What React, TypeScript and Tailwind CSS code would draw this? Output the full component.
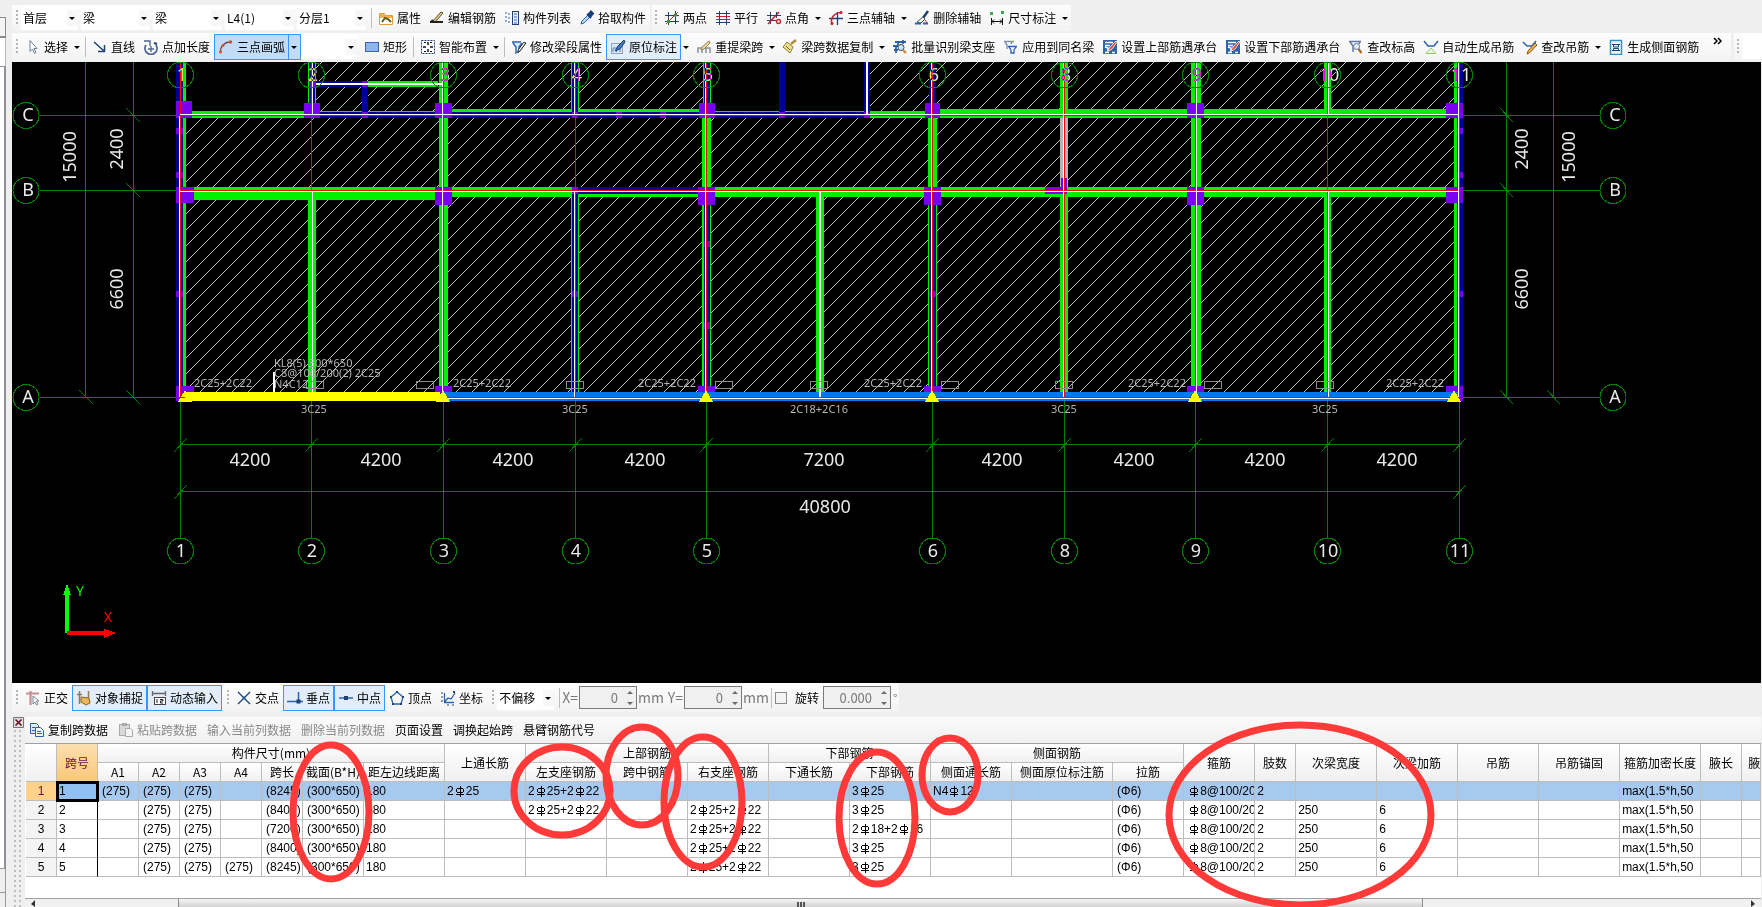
import type { ReactNode } from "react"
import clsx from "clsx"

const NAVY = "#1f4173"
const BLUE = "#2a63ad"
const RED = "#c8202c"

const ICONS: Record<string, ReactNode> = {
  props: (
    <>
      <path d="M1.5 3.5h5l1 2h7v9h-13z" fill="#fff" stroke="#e09a3c" />
      <path d="M2 4h4.500l1 2H14v2H2z" fill="#f5b04e" />
      <path d="M4 12l3-4 3 1 3 3" fill="none" stroke="#6b5a1e" strokeWidth="2" />
    </>
  ),
  editBar: (
    <>
      <path d="M1 12h13" stroke="#222" strokeWidth="2" />
      <path d="M4 11l8-9 2 1-7 8" fill="#e9cf8f" stroke="#5a4520" />
      <path d="M2 12l2-2" stroke="#222" strokeWidth="2" />
    </>
  ),
  list: (
    <>
      <path d="M2 2v12M5 3v10" stroke={BLUE} strokeDasharray="2 2" />
      <rect x="8.500" y="1.500" width="6" height="13" fill="#eaf2fb" stroke={NAVY} />
      <path d="M10 4h3M10 7h3M10 10h3M10 13h3" stroke={BLUE} />
    </>
  ),
  dropper: (
    <>
      <path d="M2 14l1-3 6-6 2 2-6 6z" fill="#bcdcf5" stroke={BLUE} />
      <path d="M8 4l4 4M9 5l3-3.500 2 2L11 7z" stroke="#173f7a" strokeWidth="2" fill="#173f7a" />
    </>
  ),
  twoPoint: (
    <>
      <path d="M4.500 2v13M11.500 1v13M1 5.500h14M1 11.500h14" stroke={NAVY} />
      <path d="M2 14L14 2" stroke={RED} />
      <circle cx="11.500" cy="5" r="1.800" fill="#3f8f2c" />
      <circle cx="4.500" cy="11.500" r="1.800" fill="#3f8f2c" />
    </>
  ),
  parallel: (
    <>
      <path d="M4.500 1v14M11.500 1v14" stroke={NAVY} />
      <path d="M1 3.500h14M1 12.500h14" stroke={NAVY} />
      <path d="M1 6.500h14M1 9.500h14" stroke={RED} />
    </>
  ),
  pointAngle: (
    <>
      <path d="M4.500 2v12M1 5.500h14M1 10.500h9" stroke={NAVY} />
      <path d="M2 14L13 2" stroke={RED} strokeWidth="1.500" />
      <path d="M10.500 2v6" stroke={NAVY} />
      <circle cx="12.500" cy="11.500" r="2" fill="none" stroke={RED} strokeWidth="1.300" />
    </>
  ),
  threeAxis: (
    <>
      <path d="M1 8.500h14M9.500 2v13" stroke={NAVY} strokeWidth="1.300" />
      <path d="M4 14C2 8 6 3 13 2.500" fill="none" stroke={RED} strokeWidth="1.500" />
      <circle cx="13" cy="2.500" r="1.500" fill={RED} />
      <circle cx="4" cy="13.500" r="1.500" fill={RED} />
    </>
  ),
  brush: (
    <>
      <path d="M14 1l-5 7" stroke={NAVY} strokeWidth="2.500" />
      <path d="M9 7l2 2-4 4-4-1z" fill="#f4f4f4" stroke="#555" />
      <path d="M1 13.500h6M9 13.500h5" stroke={BLUE} strokeWidth="2" />
      <path d="M11 10l2 3" stroke={RED} />
    </>
  ),
  dimension: (
    <>
      <rect x="1" y="2" width="3" height="3" fill="#46a64d" />
      <rect x="12" y="1" width="3" height="3" fill="#46a64d" />
      <path d="M2.500 8v7M13.500 8v7M3 11.500h10M5 9.500l-2 2 2 2M11 9.500l2 2-2 2" fill="none" stroke="#111" />
    </>
  ),
  cursor: (
    <path d="M5 1.500v11l2.500-2.500 2 4.500 1.500-1-2-4h3z" fill="#fff" stroke="#6d7f9a" />
  ),
  line: (
    <path d="M2 3l10 9M12.500 6v6.500H6" fill="none" stroke={NAVY} strokeWidth="1.500" />
  ),
  pointLength: (
    <>
      <path d="M3 6a6 6 0 1 0 10 0" fill="none" stroke="#47658f" strokeWidth="1.800" />
      <path d="M1 2h6v5M5 10h6M8 7v6" fill="none" stroke="#47658f" strokeWidth="1.300" />
      <path d="M11 4l3 1" stroke={NAVY} strokeWidth="2" />
    </>
  ),
  arc: (
    <>
      <path d="M2.500 13.500C2 8 6 3 12.500 3" fill="none" stroke="#6a4a4a" strokeWidth="1.300" />
      <circle cx="2.500" cy="13" r="1.500" fill="#d8502c" />
      <circle cx="5" cy="6.500" r="1.500" fill="#d8502c" />
      <circle cx="12.500" cy="3" r="1.700" fill="#d8502c" />
    </>
  ),
  rect: <rect x="1.500" y="3.500" width="13" height="9" fill="#8fb4f2" stroke="#3a62b5" />,
  smart: (
    <>
      <rect x="1.500" y="1.500" width="13" height="13" fill="#fff" stroke={NAVY} strokeDasharray="2 1" />
      <path d="M8 3v3M8 10v3M3 8h3M10 8h3" stroke="#111" strokeWidth="1.500" />
      <path d="M4 3.500h2M10 3.500h2M4 12.500h2M10 12.500h2" stroke="#111" />
    </>
  ),
  modify: (
    <>
      <path d="M1 3h9M2 4l3 4v6l3-2V8l3-4" fill="#d8ecff" stroke={BLUE} strokeWidth="1.400" />
      <path d="M15 4l-6 8-2 1.500.5-3 5-7z" fill="#f3f0e0" stroke="#222" />
    </>
  ),
  annotate: (
    <>
      <rect x="1.500" y="4.500" width="11" height="10" fill="#dbe7f5" stroke="#8ea6c4" />
      <path d="M3 13V9h7v4M6.500 9v4" fill="none" stroke="#5f7ea8" />
      <path d="M14 1L8 7l-3 5 5-2 5-7z" fill="#3f79c6" stroke="#173f7a" />
    </>
  ),
  respan: (
    <>
      <path d="M2 14V9h12v5M6 9v5M10 9v5" fill="none" stroke="#8793a4" strokeWidth="1.500" />
      <path d="M13 2L6 8l-1 3 3-1 6-6z" fill="#ead9a5" stroke="#9b8140" />
    </>
  ),
  copySpan: (
    <>
      <path d="M14 1l-5 4" stroke="#b08b3c" strokeWidth="2.500" />
      <path d="M5 3l6 5-3 6-7-6z" fill="#f0e08c" stroke="#8d7a2e" />
      <path d="M4 7l4 4" stroke="#555" />
    </>
  ),
  batch: (
    <>
      <path d="M3 3h11M1 7h5M2 11h4M4 14V8M6 2v4M11 1v4" stroke={BLUE} strokeWidth="1.800" />
      <circle cx="9" cy="8.500" r="3" fill="#cfe6fa" stroke="#444" />
      <path d="M11 11l3 3" stroke="#c98a2e" strokeWidth="2.200" />
    </>
  ),
  apply: (
    <>
      <path d="M1 2.500h10M2 3l2 3v4M9 3L8 5" fill="none" stroke="#8193b0" strokeWidth="1.500" />
      <path d="M5 7.500h9M6 8l2 3v3h3v-3l2-3" fill="#fff" stroke={BLUE} strokeWidth="1.300" />
    </>
  ),
  bearing: (
    <>
      <path d="M1 1h14v14H1z" fill="#2f64a8" />
      <path d="M3 3.500h8M3 6.500h5M3 8l3 1v3M3 13.500h4M10 13.500h3" fill="none" stroke="#fff" strokeWidth="1.500" />
      <path d="M14 2L8 8l-3 5 5-3 5-7z" fill="#e8472f" stroke="#fff" strokeWidth="0.800" />
    </>
  ),
  checkLevel: (
    <>
      <path d="M1 2.500h12M2 3l3 4v6M12 3l-1 2" fill="none" stroke="#6279a8" strokeWidth="1.500" />
      <circle cx="8.500" cy="7.500" r="3" fill="#e6f1fb" stroke="#68758a" />
      <path d="M10.500 10l3 4" stroke="#a5682b" strokeWidth="2.200" />
    </>
  ),
  autoHang: (
    <>
      <path d="M1 2l4 5h6l4-5" fill="none" stroke={BLUE} strokeWidth="1.500" />
      <path d="M3 14.500L8 9l5 5.500z" fill="#eaf7dd" stroke="#8fcf72" />
    </>
  ),
  editHang: (
    <>
      <path d="M1 3l4 4h5l4-5" fill="none" stroke={BLUE} strokeWidth="1.500" />
      <path d="M13 4l-7 8-1 3 3-1.500L15 6z" fill="#f0b046" stroke="#8a5a1d" />
    </>
  ),
  sideBar: (
    <>
      <rect x="2.500" y="1.500" width="11" height="14" fill="#eef7fd" stroke="#3c8fc0" strokeWidth="1.500" />
      <path d="M4 5.500h8M4 11.500h8M5.500 5v3h5V5M5.500 12V9.500h5V12" fill="none" stroke={NAVY} />
    </>
  ),
  ortho: (
    <>
      <path d="M1 3.500h13M5.500 1v14" stroke="#c98d8d" strokeWidth="2.200" />
      <path d="M8 6v8l2-2 1.500 3 1.500-1-1.500-3H14z" fill="#fff" stroke="#7a88a0" />
    </>
  ),
  snap: (
    <>
      <path d="M3.500 1v13M12.500 1v7M1 4.500h5" stroke="#9a7a4a" strokeWidth="1.500" />
      <path d="M5 7l8 1 1 5-4 2-5-3z" fill="#e8b75c" stroke="#8d6422" />
    </>
  ),
  dynInput: (
    <>
      <path d="M1 3.500h14M1.500 1v5M14.500 1v5" stroke="#666" strokeWidth="1.300" />
      <rect x="3.500" y="7.500" width="11" height="7" fill="#fff" stroke="#444" />
      <path d="M6 9v4M9 9.500h3v1.500H9.500v2H12" fill="none" stroke="#222" />
    </>
  ),
  cross: (
    <>
      <path d="M2 2l12 12M14 2L2 14" stroke={NAVY} strokeWidth="1.300" />
      <rect x="6.500" y="6.500" width="3" height="3" fill={BLUE} />
    </>
  ),
  perp: (
    <>
      <path d="M0 11.500h16M11.500 2v10" stroke={BLUE} strokeWidth="1.500" />
      <rect x="9.500" y="9.500" width="4" height="4" fill={NAVY} />
    </>
  ),
  mid: (
    <>
      <path d="M1 8h14" stroke={BLUE} strokeWidth="1.500" />
      <rect x="6" y="6" width="4" height="4" fill={NAVY} />
    </>
  ),
  vertex: (
    <>
      <path d="M8 2l6 5-2 7H4L2 7z" fill="none" stroke={BLUE} strokeWidth="1.300" />
      <path d="M7 1h2v2H7zM1 6h2v2H1zM13 6h2v2h-2zM3 13h2v2H3zM11 13h2v2h-2z" fill={NAVY} />
    </>
  ),
  coord: (
    <>
      <path d="M4.500 3v9.500H14M4.500 12L8 8l3 1 4-6" fill="none" stroke={BLUE} strokeWidth="1.300" />
      <path d="M1 3h2M1 7h2M1 11h2M7 15h2M12 15h2M13 1l2 2M15 1l-2 2" stroke={NAVY} />
    </>
  ),
  copy: (
    <>
      <path d="M1.500 1.500h6l2 2v8h-8z" fill="#dceafb" stroke={BLUE} />
      <path d="M6.500 5.500h5l3 3v6h-8z" fill="#eef5fd" stroke={BLUE} />
      <path d="M8 9.500h4M8 11.500h5M3 5.500h3M3 8.500h3" stroke={BLUE} />
    </>
  ),
  paste: (
    <>
      <rect x="1.500" y="2.500" width="10" height="11" fill="#d9d9d9" stroke="#aaa" />
      <rect x="4" y="1" width="5" height="3" fill="#aaa" />
      <path d="M7.500 6.500h5l2 2v6h-7z" fill="#f4f4f4" stroke="#aaa" />
    </>
  ),
}

const Icon = ({ name }: { name: string }) => (
  <svg viewBox="0 0 16 16" className="h-4 w-4 shrink-0" aria-hidden="true">
    {ICONS[name]}
  </svg>
)

const Caret = ({ className }: { className?: string }) => (
  <svg viewBox="0 0 11 16" className={clsx("h-4 w-[11px] shrink-0", className)} aria-hidden="true">
    <path d="M2 7h6L5 10z" fill="#000" />
  </svg>
)

const Grip = () => (
  <svg viewBox="0 0 8 20" className="h-5 w-2 shrink-0" aria-hidden="true">
    <path d="M4 2v16" stroke="#b5b5b5" strokeWidth="2" strokeDasharray="2 2" />
  </svg>
)

const Separator = () => <span className="mx-[2px] h-5 w-px shrink-0 bg-[#bdbdbd]" />

interface ToolProps {
  icon?: string
  label: string
  menu?: boolean
  active?: boolean
  disabled?: boolean
}

const Tool = ({ icon, label, menu, active, disabled }: ToolProps) => (
  <>
    <button
      type="button"
      disabled={disabled}
      className={clsx(
        "flex h-[26px] shrink-0 items-center gap-[3px] whitespace-nowrap border px-[3px]",
        active ? "border-[#3399ff] bg-[#e2edf9]" : "border-transparent",
        disabled && "text-[#8a8a8a]",
      )}>
      {icon && <Icon name={icon} />}
      {label}
    </button>
    {menu && <Caret />}
  </>
)

const Combo = ({ label, value, width }: { label: string; value: string; width: string }) => (
  <span className={clsx("mr-[3px] flex h-6 shrink-0 items-center bg-white", width)}>
    <select
      aria-label={label}
      defaultValue={value}
      className="h-full min-w-0 flex-1 appearance-none bg-white pl-[2px] outline-none">
      <option>{value}</option>
    </select>
    <Caret className="bg-[#f7f7f7]" />
  </span>
)

const Spin = ({ id, value, width }: { id: string; value: string; width: string }) => (
  <span className={clsx("flex h-[23px] shrink-0 items-center border border-[#7a7a7a] bg-[#f0f0f0]", width)}>
    <input
      id={id}
      defaultValue={value}
      className="min-w-0 flex-1 bg-transparent pr-[6px] text-right text-[13px] text-[#7a7a7a] outline-none"
    />
    <svg viewBox="0 0 12 20" className="h-5 w-3 shrink-0" aria-hidden="true">
      <path d="M3 6l3-3 3 3zM3 14l3 3 3-3z" fill="#6a6a6a" />
    </svg>
  </span>
)

type Box = [x: number, y: number, w: number, h: number]

const GREEN_BEAMS: Box[] = [
  // vertical
  [183, 62, 3, 330], [308, 62, 8, 41], [308, 194, 8, 198], [439, 62, 9, 330],
  [571, 62, 8, 54], [571, 194, 8, 198], [703, 62, 8, 56], [702, 118, 9, 274],
  [816, 194, 8, 198], [928, 118, 9, 274], [1060, 62, 8, 56], [1060, 194, 8, 198],
  [1191, 62, 10, 330], [1324, 62, 7, 52], [1324, 194, 7, 198], [1454, 62, 3, 330],
  // horizontal
  [192, 111, 112, 7], [316, 111, 119, 1], [316, 81, 122, 6], [452, 109, 247, 4],
  [715, 111, 149, 1], [870, 111, 55, 7], [940, 109, 506, 9],
  [186, 187, 249, 13], [452, 187, 120, 10], [578, 194, 120, 3], [715, 187, 731, 10],
]

const NAVY_WALLS: Box[] = [
  [176, 62, 7, 339], [309, 62, 6, 41], [316, 112, 119, 6], [316, 81, 46, 6],
  [362, 81, 6, 31], [452, 112, 247, 6], [715, 112, 155, 6], [572, 62, 6, 50],
  [572, 194, 6, 198], [578, 187, 120, 7], [704, 62, 6, 41], [704, 205, 6, 187],
  [779, 62, 6, 56], [864, 62, 6, 56], [929, 62, 7, 41], [929, 205, 7, 187],
  [1457, 62, 6, 339],
]

const COLUMNS: Box[] = [
  [176, 101, 16, 17], [176, 187, 18, 16], [176, 386, 18, 15],
  [304, 103, 16, 15], [435, 103, 17, 15], [435, 187, 17, 18], [435, 386, 17, 15],
  [699, 103, 16, 15], [698, 187, 17, 18], [698, 386, 17, 15],
  [925, 103, 15, 15], [924, 187, 17, 18], [924, 386, 17, 15],
  [1187, 103, 17, 15], [1187, 187, 17, 18], [1187, 386, 17, 15],
  [1446, 103, 17, 15], [1446, 187, 17, 16], [1446, 386, 17, 15],
  [1061, 178, 6, 16], [1045, 187, 22, 7],
  // wall joints
  [176, 128, 7, 6], [176, 172, 7, 6], [176, 291, 7, 6], [362, 81, 6, 6], [362, 112, 6, 6],
  [309, 81, 7, 6], [572, 112, 6, 6], [572, 187, 6, 7], [572, 291, 6, 6], [616, 112, 6, 6],
  [660, 112, 6, 6], [704, 241, 6, 6], [704, 322, 6, 7], [779, 112, 6, 6], [864, 112, 6, 6],
  [929, 291, 7, 6], [1457, 128, 6, 6], [1457, 172, 6, 6], [1457, 291, 6, 6],
]

const WHITE_LINES: Box[] = [
  [179, 116, 1, 281], [312, 62, 1, 53], [312, 191, 1, 206], [442, 62, 1, 335],
  [574, 62, 1, 53], [574, 191, 1, 206], [705, 62, 1, 335], [819, 191, 2, 206],
  [866, 62, 2, 53], [931, 62, 1, 335], [1063, 62, 1, 335], [1196, 62, 1, 335],
  [1328, 62, 1, 53], [1328, 191, 1, 206], [1458, 62, 1, 335],
  [180, 114, 1279, 1], [180, 191, 1279, 1], [316, 83, 127, 2], [443, 398, 1016, 1],
]

const RED_LINES: Box[] = [
  [180, 62, 1, 335], [311, 62, 1, 129], [443, 62, 1, 335], [575, 62, 1, 335],
  [706, 62, 1, 335], [932, 62, 1, 335], [1064, 62, 1, 335], [1195, 62, 1, 335],
  [1327, 62, 1, 335], [1459, 62, 1, 335], [180, 115, 1280, 1], [180, 190, 1280, 1],
  [443, 397, 1017, 1],
]

const AXES = [
  { x: 180, label: "1" },
  { x: 311, label: "2" },
  { x: 443, label: "3" },
  { x: 575, label: "4" },
  { x: 706, label: "5" },
  { x: 932, label: "6" },
  { x: 1064, label: "8" },
  { x: 1195, label: "9" },
  { x: 1327, label: "10" },
  { x: 1459, label: "11" },
]

const ROWS = [
  { y: 115, label: "C" },
  { y: 190, label: "B" },
  { y: 397, label: "A" },
]

const BAY_DIMS = [
  { x: 250, label: "4200" },
  { x: 381, label: "4200" },
  { x: 513, label: "4200" },
  { x: 645, label: "4200" },
  { x: 824, label: "7200" },
  { x: 1002, label: "4200" },
  { x: 1134, label: "4200" },
  { x: 1265, label: "4200" },
  { x: 1397, label: "4200" },
]

const SIDE_DIMS = [
  { x: 70, y: 157, label: "15000" },
  { x: 117, y: 149, label: "2400" },
  { x: 117, y: 289, label: "6600" },
  { x: 1522, y: 149, label: "2400" },
  { x: 1522, y: 289, label: "6600" },
  { x: 1569, y: 157, label: "15000" },
]

const NOTES = [
  { x: 274, y: 367, label: "KL8(5) 300*650" },
  { x: 274, y: 377, label: "C8@100/200(2) 2C25" },
  { x: 274, y: 388, label: "N4C12" },
  { x: 194, y: 387, label: "2C25+2C22" },
  { x: 453, y: 387, label: "2C25+2C22" },
  { x: 638, y: 387, label: "2C25+2C22" },
  { x: 864, y: 387, label: "2C25+2C22" },
  { x: 1128, y: 387, label: "2C25+2C22" },
  { x: 1386, y: 387, label: "2C25+2C22" },
  { x: 301, y: 413, label: "3C25" },
  { x: 562, y: 413, label: "3C25" },
  { x: 790, y: 413, label: "2C18+2C16" },
  { x: 1051, y: 413, label: "3C25" },
  { x: 1312, y: 413, label: "3C25" },
]

const NOTE_BOXES = [306, 416, 566, 715, 810, 941, 1055, 1204, 1316]

const HATCH_STEPS = Array.from({ length: 16 }, (_, step) => step)

const Boxes = ({ items, fill }: { items: Box[]; fill: string }) => (
  <g fill={fill}>
    {items.map(([x, y, w, h]) => (
      <rect key={`${x}-${y}-${w}`} x={x} y={y} width={w} height={h} />
    ))}
  </g>
)

const Plan = () => (
  <svg
    viewBox="12 62 1749 621"
    className="block h-full w-full"
    shapeRendering="crispEdges"
    fontFamily="'Noto Sans', sans-serif"
    role="img"
    aria-label="梁平面图">
    <defs>
      <pattern id="hatch" width="16" height="16" patternUnits="userSpaceOnUse">
        {HATCH_STEPS.map((step) => (
          <rect key={step} x={step} y={15 - step} width="1" height="1" fill="#c0c0c0" />
        ))}
      </pattern>
    </defs>

    <rect x="186" y="62" width="1268" height="330" fill="url(#hatch)" />
    <path d="M186 62h122v56H186zM711 62h153v49H711z" fill="#000" />

    <g stroke="#008000" fill="none">
      {AXES.map(({ x }) => (
        <path key={x} d={`M${x + 0.5} 397V538M${x - 6} 452L${x + 7} 438`} />
      ))}
      <path d="M180 444.500H1459M180 491.500H1459M174 499L187 485M1453 499L1466 485" />
      {ROWS.map(({ y }) => (
        <path
          key={y}
          d={`M39 ${y + 0.5}H180M1460 ${y + 0.5}H1600M126 ${y - 7}L140 ${y + 7}M1500 ${y - 7}L1513 ${y + 7}`}
        />
      ))}
      <path d="M85.500 62V397M133.500 62V397M1506.500 62V397M1553.500 62V397M79 390L93 404M1547 390L1560 404" />
    </g>

    <Boxes items={GREEN_BEAMS} fill="#00f000" />
    <Boxes items={NAVY_WALLS} fill="#000096" />
    <rect x="1060" y="118" width="8" height="69" fill="#b4b4b4" />
    <Boxes items={COLUMNS} fill="#7800f0" />
    <rect x="443" y="392" width="1016" height="9" fill="#0078f0" />
    <Boxes items={RED_LINES} fill="#ff0000" />
    <Boxes items={WHITE_LINES} fill="#fff" />

    <rect x="186" y="392" width="254" height="9" fill="#ffff00" />
    <g fill="#ffff00">
      {[185, 443, 706, 932, 1195, 1454].map((x) => (
        <path key={x} d={`M${x - 7} 402L${x} 390L${x + 7} 402z`} />
      ))}
    </g>
    <rect x="273" y="372" width="2" height="20" fill="#fff" />
    <path d="M180 397.500h5" stroke="#ff0000" />

    <g fill="none" stroke="#8c8c8c">
      {NOTE_BOXES.map((x) => (
        <rect key={x} x={x + 0.5} y="381.500" width="17" height="7" />
      ))}
    </g>
    <g fill="#b4b4b4" fontSize="11">
      {NOTES.map(({ x, y, label }) => (
        <text key={`${x}-${y}`} x={x} y={y}>
          {label}
        </text>
      ))}
    </g>

    <g fill="none" stroke="#008000">
      {AXES.map(({ x }) => (
        <g key={x}>
          <circle cx={x + 0.5} cy="75" r="13" />
          <circle cx={x + 0.5} cy="551" r="13" />
        </g>
      ))}
      {ROWS.map(({ y }) => (
        <g key={y}>
          <circle cx="26" cy={y + 0.5} r="13" />
          <circle cx="1613" cy={y + 0.5} r="13" />
        </g>
      ))}
    </g>

    <g fill="#e8e8e8" fontSize="18" textAnchor="middle">
      <g className="mix-blend-difference">
        {AXES.map(({ x, label }) => (
          <text key={x} x={x + 2} y="81">
            {label}
          </text>
        ))}
      </g>
      {AXES.map(({ x, label }) => (
        <text key={x} x={x + 1} y="557">
          {label}
        </text>
      ))}
      {ROWS.map(({ y, label }) => (
        <g key={y}>
          <text x="28" y={y + 6}>{label}</text>
          <text x="1615" y={y + 6}>{label}</text>
        </g>
      ))}
      {BAY_DIMS.map(({ x, label }) => (
        <text key={x} x={x} y="466">
          {label}
        </text>
      ))}
      <text x="825" y="513">40800</text>
      {SIDE_DIMS.map(({ x, y, label }) => (
        <text key={`${x}-${y}`} transform={`translate(${x + 6} ${y}) rotate(-90)`}>
          {label}
        </text>
      ))}
    </g>

    <path d="M65 633v-38h-2l4-11 4 11h-2v38z" fill="#00ff00" />
    <path d="M67 631h37v-2l12 4-12 5v-3H67z" fill="#ff0000" />
    <text x="76" y="596" fontSize="14" fill="#00ff00">Y</text>
    <text x="104" y="622" fontSize="14" fill="#ff0000">X</text>
  </svg>
)

const Rebar = () => (
  <svg viewBox="0 0 12 12" className="inline-block h-3 w-3 align-[-2px]" aria-label="HRB400">
    <path d="M3 3.500h6M3 7.500h6M2.500 4v3M9.500 4v3M6.500 1v11M2 9.500h8" fill="none" stroke="currentColor" />
  </svg>
)

// "d" stands for the HRB400 bar mark
const BarText = ({ text }: { text: string }) => (
  <>
    {text.split("d").map((part, index) => (
      <span key={index}>
        {index > 0 && <Rebar />}
        {part}
      </span>
    ))}
  </>
)

const COL_WIDTHS = [
  31, 41, 41, 41, 41, 41, 41, 61, 81, 81, 81, 81, 81, 81, 81, 81, 101, 71, 71, 41, 81, 81, 81, 81, 81, 41,
]

const SPANS: string[][] = [
  ["1", "(275)", "(275)", "(275)", "", "(8245)", "(300*650)", "180", "2d25", "2d25+2d22", "", "", "", "3d25", "N4d12", "", "(Φ6)", "d8@100/20", "2", "", "", "", "", "max(1.5*h,50", "", ""],
  ["2", "", "(275)", "(275)", "", "(8400)", "(300*650)", "180", "", "2d25+2d22", "", "2d25+2d22", "", "3d25", "", "", "(Φ6)", "d8@100/20", "2", "250", "6", "", "", "max(1.5*h,50", "", ""],
  ["3", "", "(275)", "(275)", "", "(7200)", "(300*650)", "180", "", "", "", "2d25+2d22", "", "2d18+2d16", "", "", "(Φ6)", "d8@100/20", "2", "250", "6", "", "", "max(1.5*h,50", "", ""],
  ["4", "", "(275)", "(275)", "", "(8400)", "(300*650)", "180", "", "", "", "2d25+2d22", "", "3d25", "", "", "(Φ6)", "d8@100/20", "2", "250", "6", "", "", "max(1.5*h,50", "", ""],
  ["5", "", "(275)", "(275)", "(275)", "(8245)", "(300*650)", "180", "", "", "", "2d25+2d22", "", "3d25", "", "", "(Φ6)", "d8@100/20", "2", "250", "6", "", "", "max(1.5*h,50", "", ""],
]

const SUB_HEADS = [
  "A1", "A2", "A3", "A4", "跨长", "截面(B*H)", "距左边线距离",
  "左支座钢筋", "跨中钢筋", "右支座钢筋", "下通长筋", "下部钢筋", "侧面通长筋", "侧面原位标注筋", "拉筋",
]

const TAIL_HEADS = ["箍筋", "肢数", "次梁宽度", "次梁加筋", "吊筋", "吊筋锚固", "箍筋加密长度", "腋长"]

const HEAD_CELL =
  "h-[19px] overflow-hidden whitespace-nowrap border-b border-r border-[#bdbdbd] bg-linear-to-b from-white to-[#f0f0f0] p-0 text-center font-normal"

const SpanTable = () => (
  <table className="w-full table-fixed border-separate border-spacing-0 text-[12px] leading-[18px]">
    <colgroup>
      {COL_WIDTHS.map((width, index) => (
        <col key={index} style={{ width }} />
      ))}
      <col />
    </colgroup>
    <thead>
      <tr>
        <th rowSpan={2} className={HEAD_CELL} />
        <th
          rowSpan={2}
          className="border-b border-r border-[#bdbdbd] bg-linear-to-b from-[#fbdfb0] to-[#f8c878] p-0 font-normal text-[#6a0a50]">
          跨号
        </th>
        <th colSpan={7} className={HEAD_CELL}>构件尺寸(mm)</th>
        <th rowSpan={2} className={HEAD_CELL}>上通长筋</th>
        <th colSpan={3} className={HEAD_CELL}>上部钢筋</th>
        <th colSpan={2} className={HEAD_CELL}>下部钢筋</th>
        <th colSpan={3} className={HEAD_CELL}>侧面钢筋</th>
        {TAIL_HEADS.map((head) => (
          <th key={head} rowSpan={2} className={HEAD_CELL}>
            {head}
          </th>
        ))}
        <th rowSpan={2} className={clsx(HEAD_CELL, "text-clip pl-[6px] text-left")}>腋</th>
      </tr>
      <tr>
        {SUB_HEADS.map((head) => (
          <th key={head} className={HEAD_CELL}>
            {head}
          </th>
        ))}
      </tr>
    </thead>
    <tbody className="font-['Liberation_Sans','Noto_Sans_CJK_SC',sans-serif]">
      {SPANS.map((cells, row) => (
        <tr key={cells[0]} className={row === 0 ? "bg-[#a6c9ef]" : "bg-white"}>
          <th
            scope="row"
            className={clsx(
              "h-[19px] border-b border-r border-[#bdbdbd] p-0 font-normal",
              row === 0 ? "bg-[#ffd28a] text-[#6a0a50]" : "bg-[#f4f4f4]",
            )}>
            {row + 1}
          </th>
          {cells.map((cell, col) => (
            <td
              key={col}
              className={clsx(
                "h-[19px] overflow-hidden whitespace-nowrap border-b border-r border-b-[#bdbdbd] p-0",
                col === 0 ? "border-r-black pl-[2px]" : "border-r-[#bdbdbd]",
                col > 0 && (cell.startsWith("(") || col === 17 ? "pl-1" : "pl-[2px]"),
                row === 0 && col === 0 && "bg-[#93c0f2] outline-[3px] -outline-offset-2 outline-black outline-solid",
              )}>
              <BarText text={cell} />
            </td>
          ))}
        </tr>
      ))}
    </tbody>
  </table>
)

const MARKS = [
  { cx: 331, cy: 95, rx: 38, ry: 67 },
  { cx: 562, cy: 74, rx: 48, ry: 44 },
  { cx: 642, cy: 59, rx: 36, ry: 49 },
  { cx: 703, cy: 85, rx: 39, ry: 65 },
  { cx: 877, cy: 101, rx: 38, ry: 66 },
  { cx: 950, cy: 58, rx: 28, ry: 37 },
  { cx: 1300, cy: 98, rx: 131, ry: 90 },
]

const STRIP = "flex shrink-0 items-center bg-linear-to-b from-[#fdfdfd] to-[#f3f3f3]"

export default function App() {
  return (
    <div className="relative flex h-screen overflow-hidden bg-[#efefef] font-['Noto_Sans_CJK_SC',sans-serif] text-[12px] text-black">
      <aside className="flex w-3 shrink-0 flex-col">
        <div className="h-[17px] w-[6px]" />
        <div className="h-[21px] w-[6px] border-y border-r border-b-2 border-[#8a8a8a] bg-[#f4f4f4]" />
        <div className="h-7 w-[6px] border-r border-[#bdbdbd] bg-white" />
        <div className="w-[6px] flex-1 border-r-2 border-t border-[#8e9299] bg-white" />
        <div className="h-6 w-[6px] border-r border-t border-[#9a9a9a]" />
        <div className="h-[15px] w-[6px] border-r border-t border-[#9a9a9a]" />
      </aside>

      <div className="flex min-w-0 flex-1 flex-col">
        <div className="flex pt-[5px]">
          <div className={clsx(STRIP, "h-[26px] pl-px")}>
            <Grip />
            <Combo label="楼层" value="首层" width="w-[57px]" />
            <Combo label="构件类型" value="梁" width="w-[69px]" />
            <Combo label="构件" value="梁" width="w-[69px]" />
            <Combo label="构件名称" value="L4(1)" width="w-[69px]" />
            <Combo label="分层" value="分层1" width="w-[69px]" />
            <Separator />
            <Tool icon="props" label="属性" />
            <Tool icon="editBar" label="编辑钢筋" />
            <Tool icon="list" label="构件列表" />
            <Tool icon="dropper" label="拾取构件" />
          </div>
          <div className={clsx(STRIP, "ml-[2px] h-[26px]")}>
            <Grip />
            <Tool icon="twoPoint" label="两点" />
            <Tool icon="parallel" label="平行" />
            <Tool icon="pointAngle" label="点角" menu />
            <Tool icon="threeAxis" label="三点辅轴" menu />
            <Tool icon="brush" label="删除辅轴" />
            <Tool icon="dimension" label="尺寸标注" menu />
          </div>
        </div>

        <div className="flex h-[31px] items-start pt-[2px]">
          <div className={clsx(STRIP, "h-7 pl-px")}>
            <Grip />
            <Tool icon="cursor" label="选择" menu />
            <Separator />
            <Tool icon="line" label="直线" />
            <Tool icon="pointLength" label="点加长度" />
            <span className="flex border border-[#3399ff] bg-[#c2dcf7]">
              <button type="button" className="flex h-6 items-center gap-[3px] whitespace-nowrap px-[3px]">
                <Icon name="arc" />
                三点画弧
              </button>
              <button type="button" aria-label="画弧方式" className="flex items-center border-l border-[#3399ff]">
                <Caret />
              </button>
            </span>
            <Combo label="参数" value="" width="w-[56px]" />
            <Tool icon="rect" label="矩形" />
            <Separator />
            <Tool icon="smart" label="智能布置" menu />
            <Separator />
            <Tool icon="modify" label="修改梁段属性" />
            <Tool icon="annotate" label="原位标注" menu active />
            <Tool icon="respan" label="重提梁跨" menu />
            <Tool icon="copySpan" label="梁跨数据复制" menu />
            <Tool icon="batch" label="批量识别梁支座" />
            <Tool icon="apply" label="应用到同名梁" />
            <Tool icon="bearing" label="设置上部筋遇承台" />
            <Tool icon="bearing" label="设置下部筋遇承台" />
            <Tool icon="checkLevel" label="查改标高" />
            <Tool icon="autoHang" label="自动生成吊筋" />
            <Tool icon="editHang" label="查改吊筋" menu />
            <Tool icon="sideBar" label="生成侧面钢筋" />
            <button type="button" aria-label="更多" className="ml-[10px] mr-2 flex self-start pt-1">
              <svg viewBox="0 0 10 8" className="h-2 w-[10px]" fill="none" stroke="#000" strokeWidth="1.500">
                <path d="M1 1l3 3-3 3M5 1l3 3-3 3" />
              </svg>
            </button>
          </div>
          <div className={clsx(STRIP, "ml-[3px] h-7")}>
            <Grip />
            <span className="h-6 w-6 bg-white" />
          </div>
        </div>

        <main className="mr-px min-h-0 flex-1 bg-black">
          <Plan />
        </main>

        <div className="flex h-[34px] shrink-0 items-start">
          <div className={clsx(STRIP, "h-[29px] pl-px")}>
            <Grip />
            <Tool icon="ortho" label="正交" />
            <Tool icon="snap" label="对象捕捉" active />
            <Tool icon="dynInput" label="动态输入" active />
            <span className="w-[2px]" />
            <Grip />
            <Tool icon="cross" label="交点" />
            <Tool icon="perp" label="垂点" active />
            <Tool icon="mid" label="中点" active />
            <Tool icon="vertex" label="顶点" />
            <Tool icon="coord" label="坐标" />
            <span className="w-[2px]" />
            <Grip />
            <Combo label="偏移方式" value="不偏移" width="w-[57px]" />
            <Separator />
            <span className="flex items-center gap-px text-[14px] text-[#7a7a7a]">
              <label htmlFor="offset-x">X=</label>
              <Spin id="offset-x" value="0" width="w-[58px]" />
              mm
              <label htmlFor="offset-y" className="ml-[3px]">Y=</label>
              <Spin id="offset-y" value="0" width="w-[58px]" />
              mm
            </span>
            <Separator />
            <label className="flex items-center gap-2 pl-px pr-1">
              <input type="checkbox" className="h-3 w-3 appearance-none border border-[#8a8a8a] bg-[#f4f4f4]" />
              旋转
            </label>
            <Spin id="rotation" value="0.000" width="w-[68px]" />
            <label htmlFor="rotation" className="px-[2px] text-[#7a7a7a]">°</label>
          </div>
        </div>

        <section className="flex h-[190px] shrink-0">
          <div className="flex w-[13px] shrink-0 flex-col items-start pl-px">
            <button type="button" aria-label="关闭" className="h-[11px] w-[11px] bg-[#dcdcdc]">
              <svg viewBox="0 0 11 11" className="h-full w-full" fill="none">
                <path d="M0.500 0.500h10v10h-10z" stroke="#777" />
                <path d="M2.500 2.500l6 6M8.500 2.500l-6 6" stroke="#5a1020" strokeWidth="1.500" />
              </svg>
            </button>
            <svg className="w-[11px] flex-1" aria-hidden="true">
              <defs>
                <pattern id="dots" width="5" height="5" patternUnits="userSpaceOnUse">
                  <rect x="1" y="2" width="2" height="2" fill="#bdbdbd" />
                </pattern>
              </defs>
              <rect width="10" height="100%" fill="url(#dots)" />
            </svg>
          </div>
          <div className="mr-px flex min-w-0 flex-1 flex-col bg-white">
            <div className="flex h-[27px] shrink-0 items-start gap-[2px] border-b border-[#a0a0a0] bg-linear-to-b from-[#fbfbfb] to-[#f0f0f0]">
              <Tool icon="copy" label="复制跨数据" />
              <Tool icon="paste" label="粘贴跨数据" disabled />
              <Tool label="输入当前列数据" disabled />
              <Tool label="删除当前列数据" disabled />
              <Tool label="页面设置" />
              <Tool label="调换起始跨" />
              <Tool label="悬臂钢筋代号" />
            </div>
            <div className="min-h-0 flex-1 overflow-hidden pl-px">
              <SpanTable />
            </div>
            <div className="flex h-[9px] shrink-0 border-t border-[#a0a0a0] bg-[#f0f0f0]">
              <div className="w-[153px] pl-1">
                <svg viewBox="0 0 8 8" className="h-2 w-2">
                  <path d="M6 1v7L2 5z" fill="#333" />
                </svg>
              </div>
              <div className="flex flex-1 justify-center gap-px border-x border-[#8a8a8a] bg-linear-to-b from-[#f6f6f6] to-[#d2d2d2] pt-[3px]">
                <span className="w-[2px] bg-[#555]" />
                <span className="w-[2px] bg-[#555]" />
                <span className="w-[2px] bg-[#555]" />
              </div>
              <div className="flex w-[338px] justify-end pr-1">
                <svg viewBox="0 0 8 8" className="h-2 w-2">
                  <path d="M2 1v7l4-3z" fill="#333" />
                </svg>
              </div>
            </div>
          </div>
        </section>
      </div>

      <svg
        className="pointer-events-none absolute bottom-0 left-0 h-[190px] w-full"
        fill="none"
        stroke="#ff3a38"
        strokeWidth="7"
        aria-hidden="true">
        {MARKS.map((mark) => (
          <ellipse key={mark.cx} {...mark} />
        ))}
      </svg>
    </div>
  )
}
